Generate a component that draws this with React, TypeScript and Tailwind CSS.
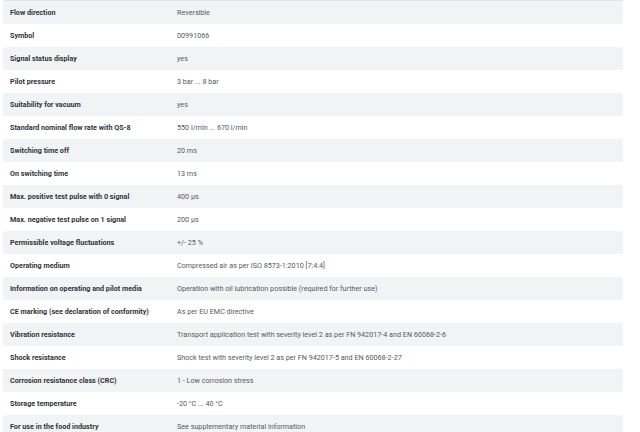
import React from "react";

const rows: [string, string][] = [
  ["Flow direction", "Reversible"],
  ["Symbol", "00991066"],
  ["Signal status display", "yes"],
  ["Pilot pressure", "3 bar ... 8 bar"],
  ["Suitability for vacuum", "yes"],
  ["Standard nominal flow rate with QS-8", "550 l/min ... 670 l/min"],
  ["Switching time off", "20 ms"],
  ["On switching time", "13 ms"],
  ["Max. positive test pulse with 0 signal", "400 µs"],
  ["Max. negative test pulse on 1 signal", "200 µs"],
  ["Permissible voltage fluctuations", "+/- 25 %"],
  ["Operating medium", "Compressed air as per ISO 8573-1:2010 [7:4:4]"],
  ["Information on operating and pilot media", "Operation with oil lubrication possible (required for further use)"],
  ["CE marking (see declaration of conformity)", "As per EU EMC directive"],
  ["Vibration resistance", "Transport application test with severity level 2 as per FN 942017-4 and EN 60068-2-6"],
  ["Shock resistance", "Shock test with severity level 2 as per FN 942017-5 and EN 60068-2-27"],
  ["Corrosion resistance class (CRC)", "1 - Low corrosion stress"],
  ["Storage temperature", "-20 °C ... 40 °C"],
  ["For use in the food industry", "See supplementary material information"],
];

export default function App() {
  return (
    <div className="w-[640px] h-[432px] overflow-hidden bg-white" style={{ fontFamily: "Roboto, 'Liberation Sans', sans-serif" }}>
      <div className="ml-[3px] w-[620px] border-t border-[#e3e5e8]">
        {rows.map(([k, v], i) => (
          <div
            key={k}
            className={`grid grid-cols-[174px_1fr] items-center h-[23px] pt-[2px] rounded-[2px] text-[7.2px] ${i % 2 === 0 ? "bg-[#f2f3f5]" : "bg-white"}`}
          >
            <div className="pl-[7px] font-bold text-[#30343a]">{k}</div>
            <div className="text-[#555a60]">{v}</div>
          </div>
        ))}
      </div>
    </div>
  );
}
